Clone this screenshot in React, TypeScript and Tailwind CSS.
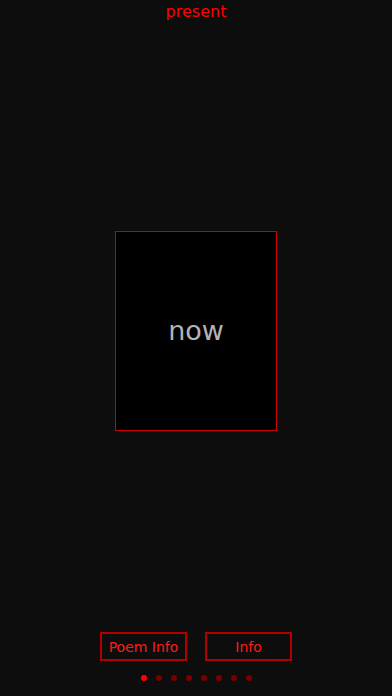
const dots = [true, false, false, false, false, false, false, false];

function PoemCard({ word }: { word: string }) {
  return (
    <div className="w-[162px] h-[200px] bg-black border border-[#cc0000] flex items-center justify-center">
      <span className="text-[27px] text-[#b4b4b4] leading-none">{word}</span>
    </div>
  );
}

function FooterButton({ label }: { label: string }) {
  return (
    <button className="w-[87px] h-[29px] border-2 border-[#b00000] text-[#ff1a1a] text-[14px] leading-none flex items-center justify-center">
      {label}
    </button>
  );
}

export default function App() {
  return (
    <div
      className="w-full h-[696px] bg-[#0d0d0d] flex flex-col overflow-hidden"
      style={{ fontFamily: '"DejaVu Sans", Verdana, sans-serif' }}
    >
      <header className="h-6 flex items-center justify-center">
        <h1 className="text-[16px] text-[#ff0000] leading-none">present</h1>
      </header>

      <main className="flex-1 flex items-center justify-center pt-[5px]">
        <PoemCard word="now" />
      </main>

      <footer className="h-16 flex flex-col items-center">
        <div className="flex gap-[18px]">
          <FooterButton label="Poem Info" />
          <FooterButton label="Info" />
        </div>
        <div className="flex gap-[9px] mt-[14px]">
          {dots.map((active, i) => (
            <span
              key={i}
              className={`w-[6px] h-[6px] rounded-full ${active ? "bg-[#ff0000]" : "bg-[#7a0000]"}`}
            />
          ))}
        </div>
      </footer>
    </div>
  );
}
